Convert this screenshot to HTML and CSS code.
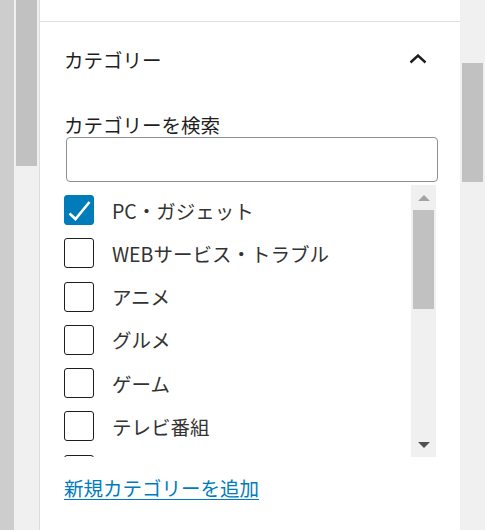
FILE: index.html
```html
<!DOCTYPE html>
<html lang="ja">
<head>
<meta charset="utf-8">
<link rel="stylesheet" href="styles.css">
</head>
<body>
<div class="frame">
  <div class="edge"></div>
  <div class="vbar left"><div class="thumb"></div></div>
  <div class="panel">
    <div class="top"></div>
    <div class="section">
      <div class="head">
        <span class="title">カテゴリー</span>
        <svg class="chev" width="18" height="10" viewBox="0 0 18 10"><path d="M1.5 8.5 L9 1.5 L16.5 8.5" fill="none" stroke="#1e1e1e" stroke-width="2.4"/></svg>
      </div>
      <label class="search-label">カテゴリーを検索</label>
      <div class="search"></div>
      <div class="listbox">
        <div class="items">
          <div class="row"><span class="cb checked"><svg width="30" height="30" viewBox="0 0 30 30"><path d="M5.5 18.5 L11.5 24 L25.5 7" fill="none" stroke="#fff" stroke-width="2.6"/></svg></span><span class="txt">PC・ガジェット</span></div>
          <div class="row"><span class="cb"></span><span class="txt">WEBサービス・トラブル</span></div>
          <div class="row"><span class="cb"></span><span class="txt">アニメ</span></div>
          <div class="row"><span class="cb"></span><span class="txt">グルメ</span></div>
          <div class="row"><span class="cb"></span><span class="txt">ゲーム</span></div>
          <div class="row"><span class="cb"></span><span class="txt">テレビ番組</span></div>
          <div class="row"><span class="cb"></span></div>
        </div>
        <div class="lbar">
          <div class="arrow up"></div>
          <div class="lthumb"></div>
          <div class="spacer"></div>
          <div class="arrow down"></div>
        </div>
      </div>
      <a class="add" href="#">新規カテゴリーを追加</a>
    </div>
  </div>
  <div class="vbar right"><div class="thumb"></div></div>
</div>
</body>
</html>
```
FILE: styles.css
```css
* { box-sizing: border-box; }
html, body { margin: 0; padding: 0; }
body {
  width: 485px;
  height: 530px;
  overflow: hidden;
  background: #fff;
  font-family: "Noto Sans CJK JP", "Noto Sans", sans-serif;
  color: #1e1e1e;
}
.frame {
  display: flex;
  height: 530px;
}
.edge {
  width: 14px;
  background: #cdcdcd;
}
.vbar {
  width: 25px;
  background: #f0f0f0;
  position: relative;
}
.vbar.left { border-right: 1px solid #dcdcdc; width: 26px; }
.vbar.left .thumb {
  margin-left: 2px;
  width: 21px;
  height: 166px;
  background: #c1c1c1;
}
.vbar.right .thumb {
  margin-left: 2px;
  margin-top: 63px;
  width: 21px;
  height: 119px;
  background: #c1c1c1;
}
.panel {
  width: 420px;
  display: flex;
  flex-direction: column;
}
.top {
  height: 22px;
  border-bottom: 1px solid #e0e0e0;
}
.section {
  padding: 24px 24px 0 24px;
  display: flex;
  flex-direction: column;
}
.head {
  display: flex;
  align-items: center;
  justify-content: space-between;
  height: 27px;
}
.title {
  font-size: 19.5px;
  line-height: 27px;
}
.chev { margin-right: 9px; margin-top: -1px; }
.search-label {
  margin-top: 40px;
  font-size: 19.5px;
  line-height: 24px;
  display: block;
}
.search {
  margin-left: 2px;
  width: 372px;
  flex: none;
  height: 45px;
  border: 1.5px solid #8c8f94;
  border-radius: 4px;
}
.listbox {
  margin-top: 3px;
  height: 272px;
  display: flex;
  overflow: hidden;
}
.items {
  flex: 1;
  padding-top: 10px;
  display: flex;
  flex-direction: column;
  gap: 13.3px;
}
.row {
  display: flex;
  align-items: center;
  height: 30px;
  flex: none;
}
.cb {
  width: 30px;
  height: 30px;
  flex: none;
  border: 1.5px solid #1e1e1e;
  border-radius: 3px;
  background: #fff;
  position: relative;
}
.cb.checked {
  background: #007cba;
  border-color: #007cba;
}
.cb.checked svg {
  position: absolute;
  left: -1.5px;
  top: -1.5px;
}
.txt {
  margin-left: 18px;
  font-size: 19.5px;
  line-height: 27px;
  color: #333;
}
.lbar {
  width: 25px;
  flex: none;
  background: #f0f0f0;
  display: flex;
  flex-direction: column;
  align-items: center;
}
.arrow {
  width: 0;
  height: 0;
  border-left: 6px solid transparent;
  border-right: 6px solid transparent;
}
.arrow.up {
  margin-top: 10px;
  border-bottom: 6px solid #a3a3a3;
}
.arrow.down {
  margin-bottom: 9px;
  border-top: 6px solid #505050;
}
.lthumb {
  margin-top: 9px;
  width: 21px;
  height: 99px;
  background: #c1c1c1;
}
.spacer { flex: 1; }
.add {
  margin-top: 17px;
  font-size: 19.5px;
  line-height: 27px;
  color: #007cba;
  text-decoration: underline;
  text-underline-offset: 3px;
  align-self: flex-start;
}
```
